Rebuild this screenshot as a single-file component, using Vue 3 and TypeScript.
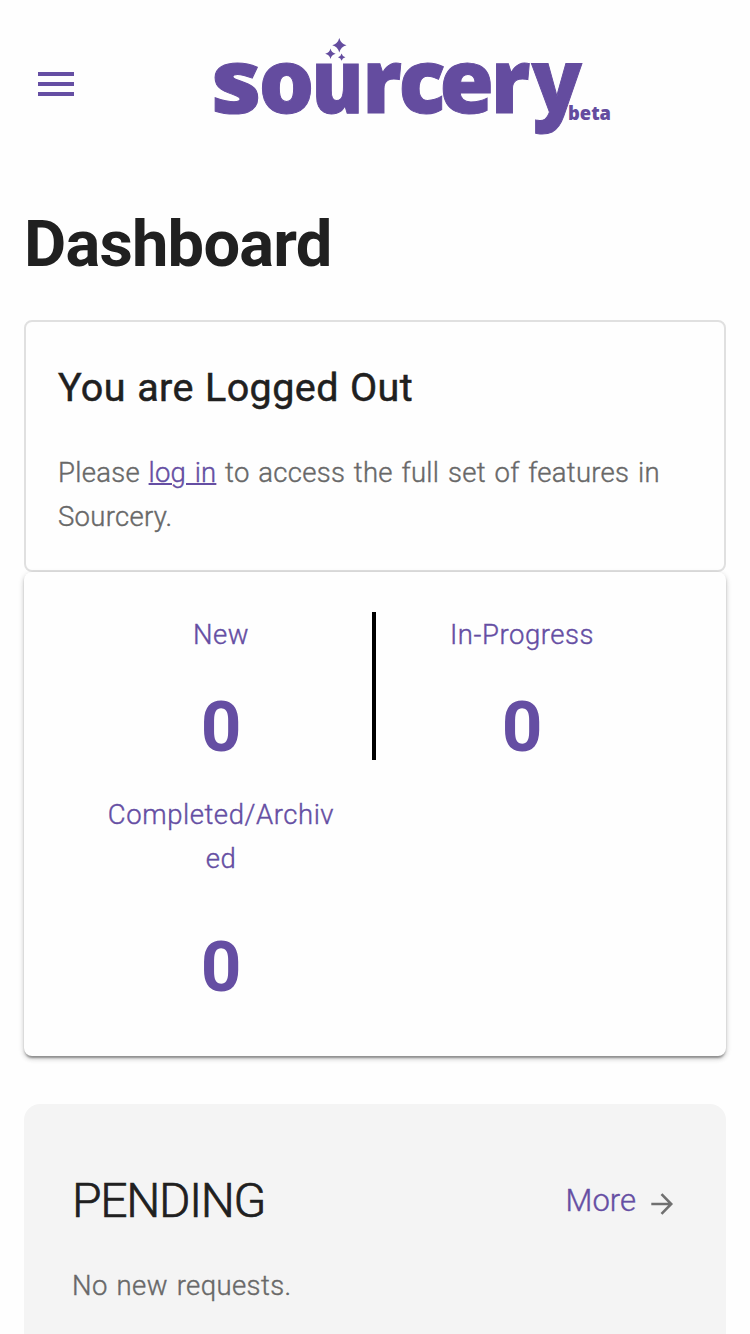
<script setup lang="ts">
interface Stat {
  label: string[]
  value: number
  divider: boolean
}

interface WordPart {
  text: string
  x: number[]
  scale: number
}

const wordmark: WordPart[] = [
  { text: 's', x: [211], scale: 1.1 },
  { text: 'o', x: [258.8], scale: 0.98 },
  { text: 'u', x: [311.4], scale: 0.87 },
  { text: 'r', x: [362.6], scale: 0.94 },
  { text: 'c', x: [398.5], scale: 0.98 },
  { text: 'e', x: [439.6], scale: 0.99 },
  { text: 'r', x: [491], scale: 0.94 },
  { text: 'y', x: [531.5], scale: 0.93 },
]

const stats: Stat[] = [
  { label: ['New'], value: 0, divider: true },
  { label: ['In-Progress'], value: 0, divider: false },
  { label: ['Completed/Archiv', 'ed'], value: 0, divider: false },
]
</script>

<template>
  <div class="page">
    <header class="header">
      <button class="menu" aria-label="Menu">
        <svg width="48" height="48" viewBox="0 0 24 24"><path fill="#654ea3" d="M3 18h18v-2H3v2zm0-5h18v-2H3v2zm0-7v2h18V6H3z" /></svg>
      </button>
      <svg class="logo" width="400" height="110" viewBox="212 32 400 110" fill="#644c9f">
        <path d="M339.300 38Q340.800 43.700 346.500 45.200Q340.800 46.700 339.300 52.500Q337.800 46.700 332.300 45.200Q337.800 43.700 339.300 38Z" />
        <path d="M330.500 48.500Q331.500 52.800 335.700 53.800Q331.500 54.800 330.500 59Q329.500 54.800 325.200 53.800Q329.500 52.800 330.500 48.500Z" />
        <path d="M341.600 53.500Q342.300 56.500 345.400 57.200Q342.300 57.900 341.600 60.700Q340.900 57.900 338 57.200Q340.900 56.500 341.600 53.500Z" />
        <text
          v-for="(part, i) in wordmark"
          :key="i"
          class="word"
          :transform="`scale(${part.scale} 1)`"
          :x="part.x.map((v) => v / part.scale).join(' ')"
          y="113"
        >{{ part.text }}</text>
        <text class="beta" x="568" y="120" textLength="43" lengthAdjust="spacingAndGlyphs">beta</text>
      </svg>
    </header>

    <main>
      <h1>Dashboard</h1>

      <section class="notice">
        <h2>You are Logged Out</h2>
        <p>Please <a>log in</a> to access the full set of features in Sourcery.</p>
      </section>

      <section class="stats">
        <div v-for="s in stats" :key="s.label[0]" class="stat" :class="{ divided: s.divider, tall: s.label.length > 1 }">
          <div v-for="line in s.label" :key="line" class="label">{{ line }}</div>
          <div class="value">{{ s.value }}</div>
        </div>
      </section>

      <section class="pending">
        <div class="bar">
          <h3>PENDING</h3>
          <a class="more">
            <span>More</span>
            <svg width="24" height="24" viewBox="0 0 24 24" fill="none" stroke="#707070" stroke-width="2.600"><path d="M1.300 12H21M11.500 2.200L21.200 12L11.500 21.800" /></svg>
          </a>
        </div>
        <p>No new requests.</p>
      </section>
    </main>
  </div>
</template>

<style>
body {
  background: #fefefe;
}
</style>

<style scoped>
.page {
  width: 750px;
  height: 1334px;
  overflow: hidden;
  box-sizing: border-box;
  font-family: Roboto, 'Liberation Sans', sans-serif;
  color: #202020;
  background: #fefefe;
}
h1, h2, h3, p { margin: 0; }
.header {
  height: 168px;
  display: flex;
  align-items: flex-start;
  padding-left: 32px;
  box-sizing: border-box;
}
.menu {
  margin-top: 60px;
  padding: 0;
  width: 48px;
  height: 48px;
  border: 0;
  background: none;
}
.menu svg { display: block; }
.logo {
  margin: 32px 0 0 132px;
  overflow: visible;
}
.word {
  font: 800 89px 'Open Sans', sans-serif;
  stroke: #644c9f;
  stroke-width: 1;
}
.beta {
  font: 800 19.500px 'Open Sans', sans-serif;
}
main { padding: 36px 24px 0; }
h1 {
  font-size: 65px;
  line-height: 80px;
  font-weight: 700;
  letter-spacing: -0.800px;
}
.notice {
  margin-top: 36px;
  height: 252px;
  box-sizing: border-box;
  border: 2px solid #e0e0e0;
  border-radius: 8px;
  padding: 42px 32px 0;
}
h2 {
  font-size: 39.500px;
  line-height: 48px;
  font-weight: 400;
  -webkit-text-stroke: 0.500px;
  letter-spacing: 0.400px;
  word-spacing: 1px;
  white-space: nowrap;
}
p {
  font-size: 27.500px;
  line-height: 44px;
  font-weight: 300;
  -webkit-text-stroke: 0.400px;
  letter-spacing: 0.280px;
  word-spacing: 1.700px;
  color: #686868;
}
.notice p { margin-top: 39px; }
.notice a {
  color: #654ea3;
  letter-spacing: 0.200px;
  text-decoration: underline;
  text-decoration-thickness: 2px;
}
.stats {
  height: 484px;
  box-sizing: border-box;
  padding: 41px 46px 40px;
  display: grid;
  grid-template-columns: 306px 296px;
  grid-template-rows: 148px 1fr;
  row-gap: 32px;
  border-radius: 8px;
  background: #fefefe;
  box-shadow: 0 4px 2px -2px rgba(0, 0, 0, 0.2), 0 2px 2px rgba(0, 0, 0, 0.14), 0 2px 6px rgba(0, 0, 0, 0.12), 0 3px 5px rgba(0, 0, 0, 0.12);
}
.stat {
  position: relative;
  text-align: center;
  color: #654ea3;
  padding-right: 4px;
}
.divided::after {
  content: '';
  position: absolute;
  top: -1px;
  right: 0;
  width: 4px;
  height: 148px;
  background: #000;
}
.label {
  font-size: 27.500px;
  line-height: 44px;
  font-weight: 300;
  -webkit-text-stroke: 0.400px;
  letter-spacing: 0.550px;
}
.value {
  margin-top: 28px;
  font-size: 71px;
  font-weight: 700;
  line-height: 84px;
}
.tall .value { margin-top: 44px; }
.pending {
  margin-top: 48px;
  height: 300px;
  border-radius: 16px;
  background: #f4f4f4;
  padding: 67px 48px 0;
}
.bar {
  display: flex;
  justify-content: space-between;
  align-items: center;
  height: 60px;
}
h3 {
  font-size: 48px;
  line-height: 60px;
  font-weight: 300;
  -webkit-text-stroke: 0.700px;
  letter-spacing: -1.300px;
}
.more {
  display: flex;
  align-items: center;
  gap: 14px;
  margin-right: 4px;
  font-size: 31px;
  font-weight: 300;
  -webkit-text-stroke: 0.400px;
  color: #654ea3;
}
.more span { margin-top: -2px; }
.more svg { margin-top: 5px; }
.pending p {
  margin-top: 33px;
  letter-spacing: 0.400px;
}
</style>
